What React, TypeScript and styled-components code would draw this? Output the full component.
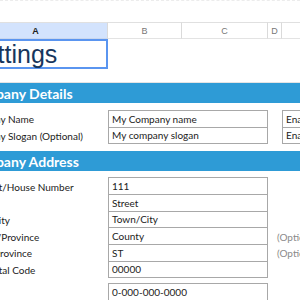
import styled, { createGlobalStyle } from "styled-components";

const GlobalStyle = createGlobalStyle`
  body {
    margin: 0;
    background: #fff;
    overflow: hidden;
  }
`;

const cols = ["A", "B", "C", "D", "E"];

const details = [
  { label: "Company Name", value: "My Company name", enable: "Enable", shift: -4 },
  { label: "Company Slogan (Optional)", value: "My company slogan", enable: "Enable", shift: -4 },
];

const address = [
  { label: "Street/House Number", value: "111", shift: 10 },
  { label: "", value: "Street", shift: 0 },
  { label: "Town/City", value: "Town/City", shift: -2 },
  { label: "County/Province", value: "County", note: "(Optional)", shift: -1 },
  { label: "State/Province", value: "ST", note: "(Optional)", shift: 1 },
  { label: "Postal Code", value: "00000", shift: 17 },
];

const App = () => {
  return (
    <Page>
      <GlobalStyle />
      <Sheet>
        {cols.map((c, i) => (
          <HeaderCell key={c} $selected={i === 0}>
            {c}
          </HeaderCell>
        ))}

        <TitleCell>Settings</TitleCell>
        <BlankRow />

        <Band>Company Details</Band>

        <Rows $top={8}>
          {details.map((d, i) => (
            <Row key={d.label}>
              <Label $shift={d.shift}>{d.label}</Label>
              <Field $first={i === 0} $col="2 / 4">
                {d.value}
              </Field>
              <Field $first={i === 0} $col="5 / 6">
                {d.enable}
              </Field>
            </Row>
          ))}
        </Rows>

        <Band $top={7}>Company Address</Band>

        <Rows $top={7}>
          {address.map((a, i) => (
            <Row key={a.value}>
              <Label $shift={a.shift}>{a.label}</Label>
              <Field $first={i === 0} $col="2 / 4">
                {a.value}
              </Field>
              {a.note && <Note>{a.note}</Note>}
            </Row>
          ))}
        </Rows>

        <Rows $top={6}>
          <Row>
            <Label $shift={0}>Phone</Label>
            <Field $first $col="2 / 4">
              0-000-000-0000
            </Field>
          </Row>
        </Rows>
      </Sheet>
    </Page>
  );
};

export default App;

const Page = styled.div`
  width: 300px;
  height: 300px;
  overflow: hidden;
  padding-top: 21px;
  box-sizing: border-box;
  border-top: 1px dashed #ececec;
`;

const Sheet = styled.div`
  display: grid;
  grid-template-columns: 144px 74px 86px 14px 140px;
  margin-left: -36px;
  font-family: Lato, "Open Sans", sans-serif;
`;

const HeaderCell = styled.div<{ $selected?: boolean }>`
  height: 17px;
  box-sizing: border-box;
  border-top: 1px solid #e0e0e0;
  border-right: 1px solid #dadada;
  border-bottom: 1px solid ${(p) => (p.$selected ? "#c8d6ee" : "#e3e3e3")};
  background: ${(p) => (p.$selected ? "#d3e3fd" : "#fff")};
  color: ${(p) => (p.$selected ? "#1f1f1f" : "#777")};
  font-family: "Liberation Sans", Arial, sans-serif;
  font-size: 9px;
  font-weight: ${(p) => (p.$selected ? 700 : 400)};
  display: flex;
  align-items: center;
  justify-content: center;
`;

const TitleCell = styled.div`
  grid-column: 1 / 2;
  height: 30px;
  box-sizing: border-box;
  border: 2px solid #5a95f0;
  padding-left: 1px;
  font-family: "Liberation Sans", Arial, sans-serif;
  font-size: 25px;
  color: #17365d;
  display: flex;
  align-items: center;
  white-space: nowrap;
`;

const BlankRow = styled.div`
  grid-column: 1 / -1;
  height: 13px;
  border-bottom: 1px solid #e4e4e4;
`;

const Band = styled.div<{ $top?: number }>`
  grid-column: 1 / -1;
  margin-top: ${(p) => p.$top ?? 0}px;
  height: 20px;
  background: #2e9bd6;
  color: #fff;
  font-weight: 700;
  font-size: 14px;
  padding-left: 3px;
  display: flex;
  align-items: center;
  white-space: nowrap;
`;

const Rows = styled.div<{ $top: number }>`
  grid-column: 1 / -1;
  margin-top: ${(p) => p.$top}px;
  display: grid;
  grid-template-columns: subgrid;
`;

const Row = styled.div`
  grid-column: 1 / -1;
  display: grid;
  grid-template-columns: subgrid;
  height: 16.67px;
  font-size: 10px;
`;

const Label = styled.div<{ $shift: number }>`
  grid-column: 1 / 2;
  padding-left: ${(p) => 2 + p.$shift}px;
  color: #222;
  display: flex;
  align-items: center;
  white-space: nowrap;
`;

const Field = styled.div<{ $first?: boolean; $col: string }>`
  grid-column: ${(p) => p.$col};
  box-sizing: border-box;
  border: 1px solid #a8a8a8;
  border-top: ${(p) => (p.$first ? "1px solid #a8a8a8" : "none")};
  height: ${(p) => (p.$first ? "17.67px" : "16.67px")};
  margin-top: ${(p) => (p.$first ? "-1px" : "0")};
  padding-left: 3px;
  color: #222;
  display: flex;
  align-items: center;
  white-space: nowrap;
  overflow: hidden;
`;

const Note = styled.div`
  grid-column: 4 / 6;
  padding-left: 9px;
  color: #8a8a8a;
  display: flex;
  align-items: center;
  white-space: nowrap;
`;
